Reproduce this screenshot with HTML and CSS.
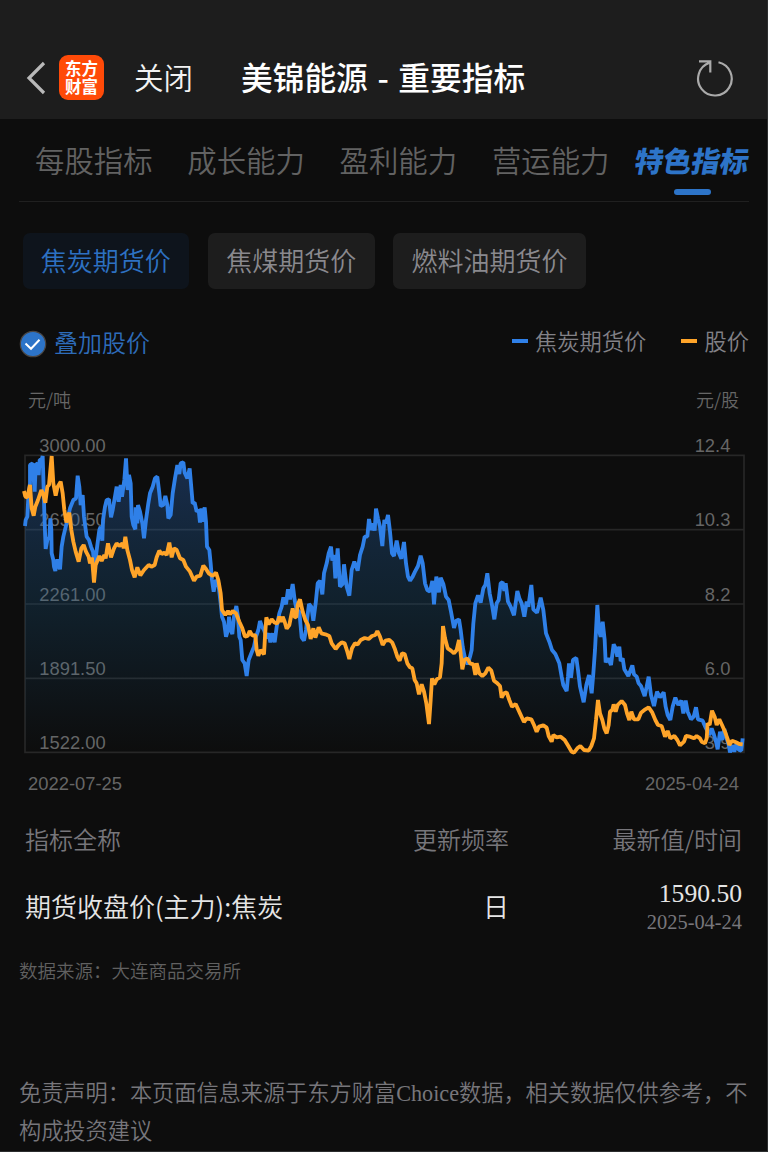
FILE: index.html
```
<!DOCTYPE html>
<html lang="zh-CN">
<head>
<meta charset="utf-8">
<title>美锦能源 - 重要指标</title>
<link rel="stylesheet" href="styles.css">
</head>
<body>
<div class="screen">
  <header class="topbar">
    <svg class="back" viewBox="0 0 20 36"><path d="M18 3L3 18l15 15"/></svg>
    <div class="logo">东方<br>财富</div>
    <span class="close">关闭</span>
    <h1 class="title">美锦能源 - 重要指标</h1>
    <svg class="refresh" viewBox="0 0 38 40"><path d="M22.500 4.300A16.800 16.800 0 1 1 13.500 4.800M3 3.300H14.300V14.500"/></svg>
  </header>
  <nav class="tabs">
    <span class="tab">每股指标</span><span class="tab">成长能力</span><span class="tab">盈利能力</span><span class="tab">营运能力</span>
    <span class="tab active"><b>特色指标</b></span>
  </nav>
  <div class="chips">
    <span class="chip on">焦炭期货价</span><span class="chip">焦煤期货价</span><span class="chip">燃料油期货价</span>
  </div>
  <div class="options">
    <svg class="check" viewBox="0 0 28 28"><circle class="disc" cx="14" cy="14" r="12.700"/><path d="M6.500 13.500l5.500 5.300 8.500-9"/></svg>
    <span class="overlay">叠加股价</span>
    <span class="legend"><i class="dash blue"></i>焦炭期货价</span>
    <span class="legend"><i class="dash orange"></i>股价</span>
  </div>
  <div class="ends units"><span>元/吨</span><span>元/股</span></div>
  <svg class="chart" viewBox="0 0 2244 1020">
    <defs>
      <linearGradient id="fade" x1="0" y1="78" x2="0" y2="967" gradientUnits="userSpaceOnUse">
        <stop offset="0" stop-color="#2f6ac8" stop-opacity=".35"/>
        <stop offset=".5" stop-color="#1c6294" stop-opacity=".23"/>
        <stop offset="1" stop-color="#1c6294" stop-opacity="0"/>
      </linearGradient>
    </defs>
    <path class="grid" d="M45 76H2202V967H45ZM45 299H2202M45 522H2202M45 745H2202"/>
    <g class="axis">
      <text x="88" y="66">3000.00</text><text x="88" y="289">2630.50</text><text x="88" y="512">2261.00</text><text x="88" y="735">1891.50</text><text x="88" y="958">1522.00</text>
    </g>
    <g class="axis right">
      <text x="2161" y="66">12.4</text><text x="2161" y="289">10.3</text><text x="2161" y="512">8.2</text><text x="2161" y="735">6.0</text><text x="2161" y="958">3.9</text>
    </g>
    <path class="area" id="area"/>
    <path class="line blue-line" id="futures"/>
    <path class="line orange-line" id="stock"/>
  </svg>
  <div class="ends dates"><span>2022-07-25</span><span>2025-04-24</span></div>
  <div class="row head"><span>指标全称</span><span>更新频率</span><span>最新值/时间</span></div>
  <div class="row data"><span>期货收盘价(主力):焦炭</span><span>日</span><span class="latest"><b>1590.50</b><small>2025-04-24</small></span></div>
  <p class="source">数据来源：大连商品交易所</p>
  <p class="disclaimer">免责声明：本页面信息来源于东方财富Choice数据，相关数据仅供参考，不构成投资建议</p>
</div>
<script src="chart.js"></script>
</body>
</html>
```
FILE: chart.js
```
// Each segment is [x offset, points]; points are "x,y" pairs in chart units.
const futures = [
  [0, "45,288 47,270 52,260 55,200 60,160 60,105 68,100 70,130 74,185 77,105 83,100 86,135 89,90 95,88 98,78 100,140 103,250 107,357 113,325 118,325 121,265 124,300 125,370 130,390 132,410 136,423 142,388 150,418 155,350 160,320 166,295 172,270 180,235 190,210 198,205 203,137 208,170 212,225 218,195 222,260 226,290 230,320 237,330 243,350 249,365 254,410 262,345 268,300 272,290 277,332 279,270 285,230 290,210 297,208 303,262 308,240 314,205 320,170 326,215 332,165 336,200 343,150 348,85 353,180 357,135 362,160 365,260 370,285 376,298 377,232 382,280 384,225 390,245 397,280 402,325 408,270 415,220 420,190 428,170 435,145 442,140 448,190 452,228 460,225 466,198 472,225 475,265 482,255 488,190 495,145 502,105 508,132 512,100 520,97 524,128 532,145 539,115 545,185 548,220 554,218 560,245 566,240 570,278 574,235"],
  [570, "8,275 14,232 18,275 21,350 28,360 32,400 36,450 41,485 48,450 55,460 62,520 66,560 72,575 78,620 84,600 87,560 92,600 97,612 102,560 109,528 114,560 118,620 122,630 127,690 134,700 140,738 146,690 154,670 162,650 168,620 175,600 180,573 186,590 192,600 200,625 206,610 211,637 218,610 224,637 230,590 238,550 245,530 250,502 258,523 264,478 270,508 278,462 284,510 290,540 298,545 305,622 312,632 318,600 322,560 327,522 334,530 340,572 347,520 353,460 360,452 367,493 372,430 380,400 386,370 393,350 397,392 402,375 406,445 413,355 420,470 428,462 432,403 440,470 448,497 455,420 463,395 473,422 480,375 488,350 494,320 502,320 507,267 513,300 520,280 524,302 528,236 534,265 540,290 547,348 553,270 558,280 564,255"],
  [1140, "0,305 6,370 12,378 20,332 27,370 34,386 42,336 48,400 54,440 60,452 68,440 75,425 84,408 92,377 98,400 105,460 112,480 120,485 127,453 132,523 139,440 147,487 152,443 160,462 168,500 176,510 183,545 192,594 198,573 207,568 212,600 218,650 225,685 233,703 240,680 245,660 250,580 256,520 264,496 272,518 280,475 286,465 292,430 299,490 306,525 313,568 320,520 326,510 332,460 338,456 343,483 347,460 354,515 362,530 372,556 382,483 388,505 395,520 403,560 410,515 415,530 424,465 430,538 441,548 447,525 452,503 460,540 468,610 478,635 486,660 496,672 508,700 515,740 520,765 530,783 534,740 537,700"],
  [1680, "3,743 9,690 19,684 24,720 30,770 41,817 49,765 57,735 65,790 70,730 75,660 82,525 87,600 92,620 98,575 104,630 107,697 114,685 123,705 131,643 137,655 142,680 148,650 152,693 158,685 163,718 175,738 187,706 192,733 200,740 206,760 213,768 224,798 230,770 236,740 243,795 252,828 261,785 270,802 281,787 287,830 293,855 301,870 308,830 316,803 325,825 334,812 340,850 347,812 353,845 363,868 371,860 378,832 384,868 398,872 407,893 418,915 425,895 432,915 438,935 443,958 450,905 457,930 463,897 470,925 476,945 480,967 487,945 493,965 500,940 507,960 514,962 518,925"]
];
const stock = [
  [0, "42,183 46,200 52,202 60,165 65,235 71,257 76,230 84,210 94,180 99,190 106,218 112,170 117,165 125,78 130,160 137,197 143,170 152,155 158,190 163,240 169,277 178,248 184,300 190,335 197,365 206,395 214,355 221,345 228,365 236,380 240,400 246,383 252,458 257,405 268,378 275,393 283,375 287,385 294,340 303,382 312,355 320,340 328,348 337,340 341,355 346,320 352,360 360,390 366,420 374,442 382,412 391,436 402,420 416,405 424,410 434,405 440,382 448,362 455,372 463,368 470,375 478,338 485,382 492,355 500,360 510,385 520,390 528,410 540,425 552,452 560,440 571,437"],
  [570, "10,407 18,417 26,430 38,438 48,428 55,450 62,490 66,540 76,555 84,543 90,553 98,543 108,550 118,575 127,595 135,620 143,618 149,603 157,617 166,615 170,660 175,677 182,660 192,673 195,620 199,562 206,583 215,568 224,578 232,580 238,560 244,575 248,560 254,575 260,596 268,585 273,560 278,535 283,560 289,562 293,525 300,508 308,545 316,570 324,585 332,627 340,595 346,623 356,592 364,610 376,613 388,618 395,640 407,657 416,645 425,637 434,640 442,665 448,687 456,655 465,640 473,643 482,630 494,624 506,627 516,618 526,615 532,603 540,620 548,645 556,632 568,630 577,638 585,658 592,680"],
  [1140, "29,692 36,670 44,672 52,700 60,712 67,715 74,750 80,760 87,793 95,763 102,785 109,820 117,882 122,810 126,745 133,763 140,748 150,742 155,700 159,588 165,625 173,655 183,662 192,670 200,660 207,630 212,670 217,718 223,690 232,685 240,700 250,703 256,735 260,700 268,730 277,738 286,730 295,713 304,722 312,752 320,758 330,768 335,803 342,790 350,787 358,810 366,830 377,822 390,850 402,876 410,865 424,868 432,885 440,905 447,890 460,886 470,893 476,918 485,935 490,915 500,922 512,920 524,930 535,948 545,965"],
  [1680, "12,968 22,955 31,948 42,960 56,962 64,948 72,925 78,870 84,810 90,850 97,870 103,895 110,910 116,885 120,845 127,840 131,823 137,845 143,825 155,813 165,825 171,850 178,870 184,845 192,868 205,868 213,848 226,838 236,832 247,848 256,870 264,885 275,888 285,920 293,903 301,925 313,918 322,930 330,946 342,935 348,918 360,920 372,925 380,918 390,925 395,935 405,940 410,925 413,880 419,885 426,842 434,860 440,885 448,868 456,885 465,905 472,925 478,945 486,932 498,937 508,942 518,943"]
];
const toPath = segments => "M" + segments.flatMap(([dx, points]) =>
  points.split(" ").map(p => {
    const [x, y] = p.split(",").map(Number);
    return (x + dx) + " " + y;
  })).join("L");
document.getElementById("futures").setAttribute("d", toPath(futures));
document.getElementById("stock").setAttribute("d", toPath(stock));
document.getElementById("area").setAttribute("d", toPath(futures) + "V967H45Z");
```
FILE: styles.css
```
* { box-sizing: border-box; }
body { margin: 0; background: #0d0d0d; }
.screen {
  width: 768px; height: 1152px; overflow: hidden;
  background: #0d0d0d;
  border-right: 1px solid #2b2d2e; border-bottom: 1px solid #2b2d2e;
  font-family: "Noto Sans CJK SC", sans-serif;
  font-weight: 350;
  text-spacing-trim: space-all;
  white-space: nowrap;
}
.topbar { height: 119px; padding: 36px 33px 0 26px; display: flex; align-items: center; background: #1d1d1d; color: #f2f2f2; }
.back { width: 20px; height: 36px; fill: none; stroke: #b9b9b9; stroke-width: 3.2; }
.logo { width: 45px; height: 45px; margin-left: 13px; padding-bottom: 1px; border-radius: 9px; background: #ff4a08; color: #fff; display: flex; align-items: center; justify-content: center; font: 700 16.5px/18px "Noto Sans CJK SC", sans-serif; }
.close { margin: 0 0 3px 30px; font-size: 29.500px; }
.title { margin: 0 0 4px 48px; font-size: 31.700px; font-weight: 500; color: #fff; word-spacing: 2.500px; }
.refresh { width: 38px; height: 40px; margin-left: auto; fill: none; stroke: #aaa; stroke-width: 2.2; }
.tabs { height: 83px; margin: 0 18px 0 19px; padding-left: 16px; border-bottom: 1px solid #202020; display: flex; gap: 33.300px; line-height: 80px; font-size: 29.400px; color: #626262; }
.tab { flex: none; width: 119px; }
.active { width: 114px; margin-left: -9px; position: relative; color: #2d74c8; }
.active b { display: inline-block; font-weight: 900; font-size: 28.500px; line-height: 82px; transform: skewX(-10deg); }
.active::after { content: ""; position: absolute; left: 39px; top: 70px; width: 37px; height: 6px; border-radius: 3px; background: #2d74c8; }
.chips { display: flex; gap: 18.800px; padding: 31px 0 0 22.500px; }
.chip { height: 56px; line-height: 53px; padding: 0 18.300px; border-radius: 7px; background: #1d1d1d; color: #8a898e; font-size: 26px; }
.chip.on { background: #0e141c; color: #2d71c2; }
.options { height: 52px; margin: 28px 18px 0 19px; padding-bottom: 3px; display: flex; align-items: center; }
.check { width: 28px; height: 28px; margin-top: 4px; fill: none; stroke: #fff; stroke-width: 2; }
.disc { fill: #2d74c8; stroke: #4a4541; stroke-width: 1.200; }
.overlay { margin: 0 auto 1px 7px; font-size: 24px; color: #2d6cba; }
.legend { display: flex; align-items: center; margin: 0 0 4px 35px; font-size: 22.300px; color: #828187; }
.dash { width: 16px; height: 4px; margin: 2px 7px 0 0; }
.blue { background: #2f80e8; }
.orange { background: #ffa429; }
.ends { display: flex; justify-content: space-between; align-items: center; padding: 0 28px; color: #666; font-size: 18.400px; }
.units { height: 61px; padding-bottom: 1px; font-size: 18px; }
.chart { display: block; width: 748px; height: 340px; margin-left: 10px; }
.grid { fill: none; stroke: #272727; stroke-width: 5; }
.axis { fill: #666; font-family: "Liberation Sans", Arial, sans-serif; font-size: 55px; }
.right { text-anchor: end; }
.area { fill: url(#fade); }
.line { fill: none; stroke-width: 11.500; stroke-linejoin: bevel; }
.blue-line { stroke: #2f80e8; }
.orange-line { stroke: #ffa429; }
.dates { height: 28px; font-family: "Liberation Sans", Arial, sans-serif; }
.row { display: grid; grid-template-columns: minmax(0, 1fr) 240px 233px; align-items: center; padding: 0 25px; text-align: right; }
.row > :first-child { text-align: left; }
.head { height: 44px; margin-top: 18px; font-size: 24px; color: #77767b; }
.head > :first-child { padding-top: 1px; }
.data { height: 92px; font-size: 26px; color: #e5e5e5; }
.data > span:not(.latest) { padding-bottom: 2px; }
.latest { display: flex; flex-direction: column; padding-top: 4px; font-family: "Liberation Serif", serif; line-height: 29.500px; }
.latest b { font-weight: 400; font-size: 25.600px; }
.latest small { font-size: 20.400px; color: #77767b; }
.source { margin: 1px 0 0; padding-left: 19px; font-size: 18.500px; line-height: 34px; color: #606060; }
.disclaimer { margin: 88px 18px 0 19px; font: 350 22.200px/37.500px "Liberation Serif", "Noto Sans CJK SC", serif; color: #77767b; white-space: normal; }
```
